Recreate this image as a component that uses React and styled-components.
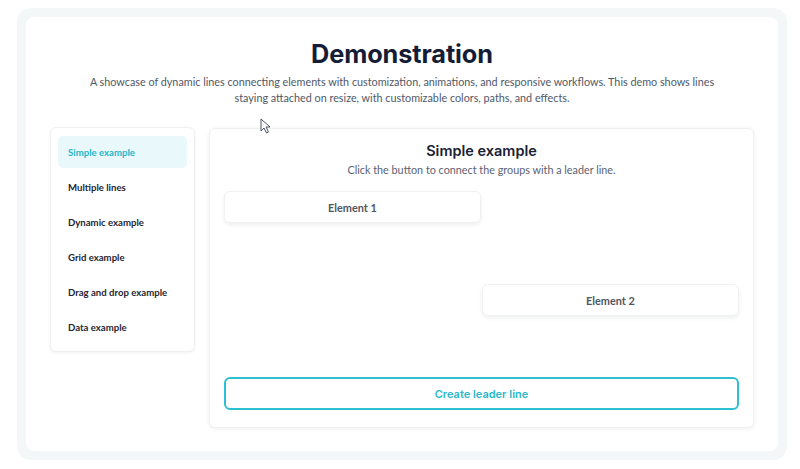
import React from "react";
import styled, { createGlobalStyle } from "styled-components";

const GlobalStyle = createGlobalStyle`
  * { box-sizing: border-box; }
  body {
    margin: 0;
    background: #ffffff;
    font-family: "Lato", "Liberation Sans", sans-serif;
  }
`;

const examples = [
  "Simple example",
  "Multiple lines",
  "Dynamic example",
  "Grid example",
  "Drag and drop example",
  "Data example",
];

function Cursor() {
  return (
    <CursorMark width="12" height="16" viewBox="0 0 12 16">
      <path
        d="M1 1 L1 13 L4 10 L6.5 15 L8.5 14 L6 9 L10 9 Z"
        fill="#ffffff"
        stroke="#4b5563"
        strokeWidth="1"
        strokeLinejoin="round"
      />
    </CursorMark>
  );
}

function App() {
  return (
    <>
      <GlobalStyle />
      <Frame>
        <Card>
          <Cursor />
          <Header>
            <Title>Demonstration</Title>
            <Lead>
              A showcase of dynamic lines connecting elements with customization, animations, and
              responsive workflows. This demo shows lines staying attached on resize, with
              customizable colors, paths, and effects.
            </Lead>
          </Header>

          <Body>
            <Sidebar>
              {examples.map((name, i) => (
                <NavItem key={name} $active={i === 0}>
                  {name}
                </NavItem>
              ))}
            </Sidebar>

            <Panel>
              <PanelTitle>Simple example</PanelTitle>
              <PanelText>Click the button to connect the groups with a leader line.</PanelText>
              <Stage>
                <Element $side="start">Element 1</Element>
                <Element $side="end">Element 2</Element>
              </Stage>
              <ActionButton type="button">Create leader line</ActionButton>
            </Panel>
          </Body>
        </Card>
      </Frame>
    </>
  );
}

const Frame = styled.div`
  margin: 8px 13px 0 17px;
  width: 770px;
  height: 452px;
  padding: 9px;
  background: #f3f7f8;
  border-radius: 14px;
`;

const Card = styled.div`
  position: relative;
  height: 100%;
  background: #ffffff;
  border-radius: 8px;
  padding: 23px 24px 24px;
  display: flex;
  flex-direction: column;
`;

const CursorMark = styled.svg`
  position: absolute;
  left: 234px;
  top: 101px;
`;

const Header = styled.header`
  display: flex;
  flex-direction: column;
  align-items: center;
  text-align: center;
`;

const Title = styled.h1`
  margin: 0;
  font-family: "Inter", "Liberation Sans", sans-serif;
  font-weight: 700;
  font-size: 25.3px;
  line-height: 28px;
  letter-spacing: -0.1px;
  color: #141c36;
`;

const Lead = styled.p`
  margin: 6px 0 0;
  max-width: 640px;
  font-size: 10.8px;
  line-height: 16px;
  color: #505867;
`;

const Body = styled.div`
  margin-top: 21px;
  display: flex;
  align-items: flex-start;
  gap: 14px;
  flex: 1;
`;

const Sidebar = styled.nav`
  width: 145px;
  padding: 8px 7px;
  display: flex;
  flex-direction: column;
  gap: 3px;
  background: #ffffff;
  border: 1px solid #eef0f2;
  border-radius: 6px;
  box-shadow: 0 1px 3px rgba(15, 23, 42, 0.06);
`;

const NavItem = styled.div`
  height: 32px;
  display: flex;
  align-items: center;
  padding: 0 10px;
  border-radius: 5px;
  font-size: 9.6px;
  font-weight: 700;
  white-space: nowrap;
  color: ${(p) => (p.$active ? "#27b6c9" : "#1f2533")};
  background: ${(p) => (p.$active ? "#e9f8fa" : "transparent")};
`;

const Panel = styled.section`
  flex: 1;
  margin-top: 1px;
  padding: 12px 14px 17px;
  display: flex;
  flex-direction: column;
  align-items: center;
  background: #ffffff;
  border: 1px solid #eef0f2;
  border-radius: 6px;
  box-shadow: 0 1px 4px rgba(15, 23, 42, 0.07);
`;

const PanelTitle = styled.h2`
  margin: 0;
  font-family: "Inter", "Liberation Sans", sans-serif;
  font-size: 14.5px;
  font-weight: 600;
  line-height: 20px;
  color: #1a2133;
`;

const PanelText = styled.p`
  margin: 1px 0 0;
  font-size: 10.8px;
  line-height: 16px;
  color: #5b6270;
`;

const Stage = styled.div`
  width: 100%;
  margin-top: 13px;
  display: flex;
  flex-direction: column;
  gap: 61px;
`;

const Element = styled.div`
  width: 257px;
  height: 32px;
  align-self: ${(p) => (p.$side === "end" ? "flex-end" : "flex-start")};
  display: flex;
  align-items: center;
  justify-content: center;
  background: #ffffff;
  border: 1px solid #f0f1f3;
  border-radius: 6px;
  box-shadow: 0 2px 4px rgba(15, 23, 42, 0.07);
  font-size: 10.9px;
  font-weight: 700;
  color: #4f5563;
`;

const ActionButton = styled.button`
  width: 100%;
  height: 33px;
  margin-top: 61px;
  background: #ffffff;
  border: 2px solid #2cc0d3;
  border-radius: 6px;
  font-family: "Inter", "Liberation Sans", sans-serif;
  font-size: 11px;
  font-weight: 600;
  color: #2ab7ca;
  cursor: pointer;
`;

export default App;
